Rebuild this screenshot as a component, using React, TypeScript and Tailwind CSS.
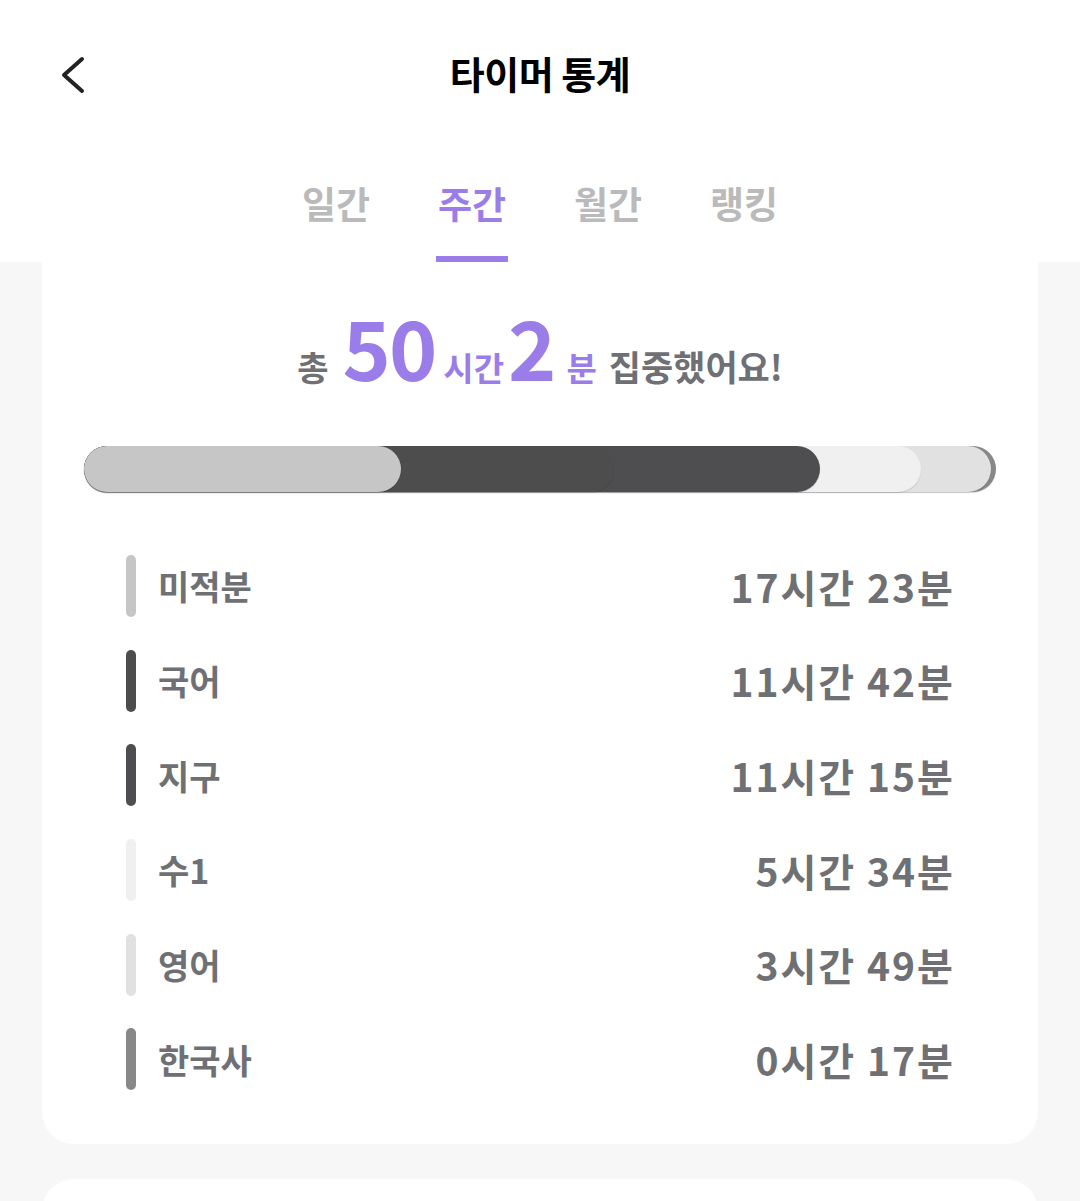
import React from 'react'

const KR = { fontFamily: '"Noto Sans CJK KR", "Noto Sans", sans-serif' }

interface Subject {
  name: string
  hours: number
  minutes: number
  color: string
}

const subjects: Subject[] = [
  { name: '미적분', hours: 17, minutes: 23, color: '#c6c6c6' },
  { name: '국어', hours: 11, minutes: 42, color: '#4d4d4e' },
  { name: '지구', hours: 11, minutes: 15, color: '#4e4e50' },
  { name: '수1', hours: 5, minutes: 34, color: '#f0f0f0' },
  { name: '영어', hours: 3, minutes: 49, color: '#e1e1e1' },
  { name: '한국사', hours: 0, minutes: 17, color: '#888888' },
]

const tabs = ['일간', '주간', '월간', '랭킹']

const StackedBar = () => {
  const total = subjects.reduce((sum, s) => sum + s.hours * 60 + s.minutes, 0)
  let acc = 0
  const ends = subjects.map((s) => {
    acc += s.hours * 60 + s.minutes
    return (acc / total) * 100
  })

  return (
    <div className="relative h-[46px] w-full">
      {/* earlier subjects sit on top, each pill runs from the start to its cumulative end */}
      {subjects.map((s, i) => (
        <div
          key={s.name}
          className="absolute left-0 top-0 h-full rounded-full shadow-[0_1px_1px_rgba(0,0,0,0.12)]"
          style={{ width: `${ends[i]}%`, backgroundColor: s.color, zIndex: subjects.length - i }}
        />
      ))}
    </div>
  )
}

const App = () => {
  return (
    <div className="min-h-screen bg-[#f7f7f7]" style={KR}>
      <header className="bg-white">
        <div className="relative flex h-[146px] items-center justify-center">
          <button type="button" className="absolute left-[53px] top-[49px] p-1">
            <svg width="30" height="44" viewBox="0 0 30 44" fill="none">
              <path d="M25 6 L7 22 L25 38" stroke="#222" strokeWidth="4" strokeLinecap="round" strokeLinejoin="round" />
            </svg>
          </button>
          <h1 className="text-[38px] font-bold leading-none tracking-[-0.5px] text-black">타이머 통계</h1>
        </div>

        <nav className="flex justify-center gap-[64px]">
          {tabs.map((tab) => {
            const active = tab === '주간'
            return (
              <div key={tab} className="flex flex-col items-center pt-[32px]">
                <span
                  className={`h-[50px] text-[37px] font-bold leading-[50px] ${
                    active ? 'text-[#9a7de9]' : 'text-[#bababa]'
                  }`}
                >
                  {tab}
                </span>
                <span className={`mt-[28px] h-[6px] w-[72px] ${active ? 'bg-[#9a7de9]' : 'bg-transparent'}`} />
              </div>
            )
          })}
        </nav>
      </header>

      <section className="mx-[42px] rounded-b-[32px] bg-white pb-[37px]">
        <div className="flex items-baseline justify-center pt-[43px]">
          <span className="mr-[14px] text-[34px] font-bold text-[#6f7074]">총</span>
          <span className="mr-[8px] text-[82px] font-bold leading-none tracking-[-2px] text-[#9a7de9]">50</span>
          <span className="mr-[4px] text-[33px] font-bold text-[#9a7de9]">시간</span>
          <span className="mr-[10px] text-[82px] font-bold leading-none text-[#9a7de9]">2</span>
          <span className="mr-[12px] text-[33px] font-bold text-[#9a7de9]">분</span>
          <span className="text-[35px] font-bold text-[#6f7074]">집중했어요!</span>
        </div>

        <div className="mt-[53px] px-[42px]">
          <StackedBar />
        </div>

        <ul className="mt-[47px] pl-[84px] pr-[83px]">
          {subjects.map((s) => (
            <li key={s.name} className="flex h-[94.7px] items-center">
              <span className="h-[62px] w-[10px] rounded-full" style={{ backgroundColor: s.color }} />
              <span className="ml-[22px] text-[34px] font-bold text-[#6f7074]">{s.name}</span>
              <span className="ml-auto text-[39px] font-bold tracking-[2px] text-[#6f7074]">
                {s.hours}시간 {s.minutes}분
              </span>
            </li>
          ))}
        </ul>
      </section>

      <section className="mx-[42px] mt-[35px] h-[60px] rounded-t-[32px] bg-white" />
    </div>
  )
}

export default App
